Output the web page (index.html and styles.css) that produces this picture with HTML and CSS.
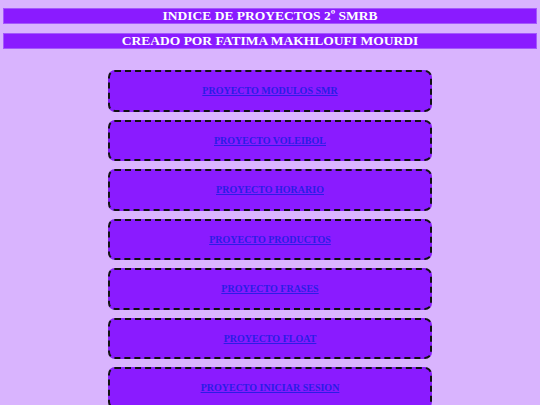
FILE: index.html
```html
<!DOCTYPE html>
<html lang="es">
<head>
<meta charset="utf-8">
<title>Indice de proyectos</title>
<link rel="stylesheet" href="styles.css">
</head>
<body>
<header class="titles">
  <h1 class="bar">INDICE DE PROYECTOS 2º SMRB</h1>
  <h2 class="bar">CREADO POR FATIMA MAKHLOUFI MOURDI</h2>
</header>
<main class="list">
  <div class="card"><a href="#">PROYECTO MODULOS SMR</a></div>
  <div class="card"><a href="#">PROYECTO VOLEIBOL</a></div>
  <div class="card"><a href="#">PROYECTO HORARIO</a></div>
  <div class="card"><a href="#">PROYECTO PRODUCTOS</a></div>
  <div class="card"><a href="#">PROYECTO FRASES</a></div>
  <div class="card"><a href="#">PROYECTO FLOAT</a></div>
  <div class="card"><a href="#">PROYECTO INICIAR SESION</a></div>
</main>
</body>
</html>
```
FILE: styles.css
```css
html, body {
  margin: 0;
  padding: 0;
}

body {
  background: #d9b4fe;
  font-family: "Liberation Serif", "Times New Roman", serif;
  padding: 8px 3px 0;
}

.titles {
  display: flex;
  flex-direction: column;
  gap: 9px;
}

.bar {
  margin: 0;
  height: 16px;
  box-sizing: border-box;
  background: #8a1bff;
  border: 1px solid #a458fc;
  color: #ffffff;
  font-size: 13.5px;
  font-weight: bold;
  line-height: 14px;
  text-align: center;
}

.list {
  display: flex;
  flex-direction: column;
  align-items: center;
  gap: 8px;
  margin-top: 21px;
}

.card {
  width: 324px;
  height: 41.5px;
  box-sizing: border-box;
  flex-shrink: 0;
  background: #8a1bff;
  border: 2px dashed #111111;
  border-radius: 7px;
  display: flex;
  align-items: center;
  justify-content: center;
}

.card a {
  color: #2b1de6;
  font-size: 10px;
  font-weight: bold;
  text-decoration: underline;
}
```
